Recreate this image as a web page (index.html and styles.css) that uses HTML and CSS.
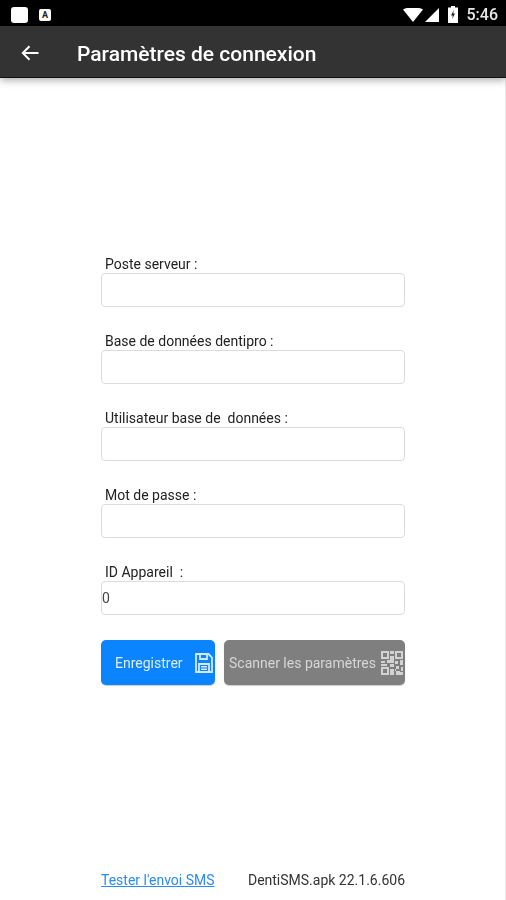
FILE: index.html
```html
<!DOCTYPE html>
<html>
	<head>
		<meta charset="utf-8" />
		<title>Paramètres de connexion</title>
		<link rel="stylesheet" href="styles.css">
	</head>
	<body>
		<div id="wrap">
			<div class="status_bar">
				<div class="status_left">
					<span class="notif_big"></span>
					<span class="notif_small">A</span>
				</div>
				<div class="status_right">
					<svg class="wifi" width="20" height="14" viewBox="0 0 20 14"><path d="M0 1.500C3 -.2 6.500 -.5 10 -.5s7 .3 10 2L10 14z" fill="#fff"/></svg>
					<svg class="signal" width="14" height="14" viewBox="0 0 14 14"><path d="M14 0V14H0z" fill="#fff"/></svg>
					<svg class="battery" width="10" height="17" viewBox="0 0 10 17"><path d="M3 0h4v1.500h3V17H0V1.500h3z" fill="#fff"/><path d="M5.800 4 3 9.500h1.800l-.6 3.500L7 7.500H5.200z" fill="#222"/></svg>
					<span class="clock">5:46</span>
				</div>
			</div>
			<div class="app_bar">
				<svg class="back" width="18" height="16" viewBox="0 0 18 16"><path d="M17.500 8H2M8.500 1.200 1.800 8l6.700 6.800" fill="none" stroke="#fff" stroke-width="2"/></svg>
				<span class="app_title">Paramètres de connexion</span>
			</div>
			<div class="content">
				<form class="form">
					<div class="field">
						<label>Poste serveur :</label>
						<input type="text">
					</div>
					<div class="field">
						<label>Base de données dentipro :</label>
						<input type="text">
					</div>
					<div class="field">
						<label>Utilisateur base de&nbsp; données :</label>
						<input type="text">
					</div>
					<div class="field">
						<label>Mot de passe :</label>
						<input type="text">
					</div>
					<div class="field">
						<label>ID Appareil&nbsp; :</label>
						<input type="text" value="0">
					</div>
					<div class="buttons">
						<div class="btn btn_save">
							<span>Enregistrer</span>
							<svg width="18" height="20" viewBox="0 0 18 20"><path d="M1 1h12.500L17 4.500V19H1z M5 1v5h7V1 M4 19v-8h10V19" fill="none" stroke="#d4e8ff" stroke-width="1.800"/><path d="M6 13h6v1.500H6zM6 15.500h6V17H6z" fill="#d4e8ff"/></svg>
						</div>
						<div class="btn btn_scan">
							<span>Scanner les paramètres</span>
							<svg width="22" height="24" viewBox="0 0 22 24" fill="#d2d2d2">
								<path d="M0 0h8v8H0z M2 2v4h4V2z" fill-rule="evenodd"/>
								<path d="M14 0h8v8h-8z M16 2v4h4V2z" fill-rule="evenodd"/>
								<path d="M0 16h8v8H0z M2 18v4h4v-4z" fill-rule="evenodd"/>
								<path d="M9 0h4v3H9zM9 5h4v5H9zM0 10h4v2H0zM6 9h7v3H6zM14 10h3v3h-3zM19 9h3v5h-3zM9 13h4v3H9zM15 15h3v3h-3zM9 18h4v6H9zM20 16h2v4h-2zM15 20h4v4h-4zM0 13h6v2H0zM14 18h1v2h-1zM19 21h3v3h-3z"/>
							</svg>
						</div>
					</div>
				</form>
				<div class="footer">
					<a class="test_link">Tester l'envoi SMS</a>
					<span class="version">DentiSMS.apk 22.1.6.606</span>
				</div>
			</div>
		</div>
	</body>
</html>
```

FILE: styles.css
```css
html,body{
	margin: 0;
	height: 100%;
}
body{
	font-family: Roboto, "Liberation Sans", sans-serif;
	background: #fff;
}
#wrap{
	width: 506px;
	height: 900px;
	display: flex;
	flex-direction: column;
	overflow: hidden;
	filter: blur(0.7px);
}
.status_bar{
	box-sizing: border-box;
	height: 26px;
	background: #000;
	display: flex;
	justify-content: space-between;
	align-items: center;
	padding: 3px 8px 0 11px;
}
.status_left{
	display: flex;
	align-items: center;
	gap: 11px;
}
.notif_big{
	width: 17px;
	height: 16px;
	background: #fff;
	border-radius: 3px;
}
.notif_small{
	width: 12px;
	height: 12px;
	background: #fff;
	border-radius: 2px;
	color: #222;
	font-size: 9px;
	font-weight: bold;
	line-height: 12px;
	text-align: center;
}
.status_right{
	display: flex;
	align-items: center;
}
.wifi{
	margin-right: 2px;
}
.signal{
	margin-right: 9px;
}
.battery{
	margin-right: 9px;
}
.clock{
	color: #e8e8e8;
	font-size: 16px;
	font-weight: 500;
}
.app_bar{
	box-sizing: border-box;
	height: 51px;
	background: #333;
	display: flex;
	align-items: center;
	padding: 2px 0 0 21px;
	box-shadow: 0 1px 0 #111, 0 3px 8px rgba(0,0,0,0.35);
	position: relative;
}
.back{
	margin-right: 38px;
}
.app_title{
	color: #fff;
	font-size: 21px;
	font-weight: 500;
	margin-top: 2px;
}
.content{
	flex: 1;
	display: flex;
	flex-direction: column;
	align-items: center;
	border-right: 1px solid #e8e8e8;
}
.form{
	width: 304px;
	margin-top: 177px;
	display: flex;
	flex-direction: column;
	margin-left: 1px;
}
.field{
	display: flex;
	flex-direction: column;
	margin-bottom: 24px;
}
.field label{
	height: 19px;
	line-height: 20px;
	padding-left: 4px;
	font-size: 14px;
	color: #222;
}
.field input{
	box-sizing: border-box;
	width: 304px;
	height: 34px;
	padding: 0;
	border: 1.5px solid #dcdcdc;
	border-radius: 4px;
	background: #fff;
	font-family: inherit;
	font-size: 14px;
	color: #444;
	outline: none;
}
.buttons{
	display: flex;
	gap: 9px;
	margin-top: 1px;
}
.btn{
	height: 45px;
	border-radius: 5px;
	display: flex;
	align-items: center;
	font-size: 14px;
	box-shadow: 0 1px 1px rgba(0,0,0,0.2);
}
.btn_save{
	width: 114px;
	box-sizing: border-box;
	background: #0a84ff;
	color: #dcecff;
	padding: 0 2px 0 14px;
	justify-content: space-between;
}
.btn_scan{
	width: 181px;
	box-sizing: border-box;
	background: #7f7f7f;
	color: #d6d6d6;
	padding: 0 2px 0 5px;
	justify-content: space-between;
}
.footer{
	width: 304px;
	margin-left: 1px;
	margin-top: auto;
	margin-bottom: 11px;
	display: flex;
	justify-content: space-between;
	font-size: 14px;
	line-height: 18px;
}
.test_link{
	color: #2a8cf0;
	text-decoration: underline;
}
.version{
	color: #333;
}
```
